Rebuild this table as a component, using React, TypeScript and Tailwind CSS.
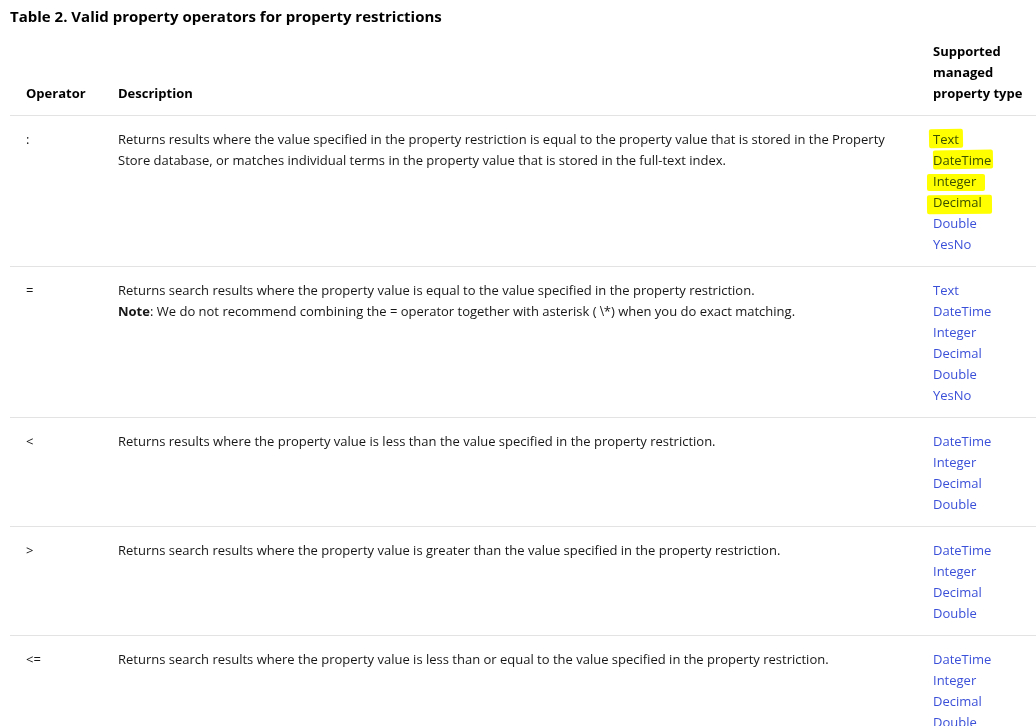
const rows: {
  op: string
  desc: React.ReactNode
  types: string[]
  marked?: boolean
}[] = [
  {
    op: ':',
    desc: (
      <>
        Returns results where the value specified in the property restriction is equal to the property value that is
        stored in the Property Store database, or matches individual terms in the property value that is stored in the
        full-text index.
      </>
    ),
    types: ['Text', 'DateTime', 'Integer', 'Decimal', 'Double', 'YesNo'],
    marked: true,
  },
  {
    op: '=',
    desc: (
      <>
        Returns search results where the property value is equal to the value specified in the property restriction.
        <br />
        <b className="font-bold">Note</b>: We do not recommend combining the = operator together with asterisk ({' '}
        <b className="font-bold font-['Liberation_Serif',serif] text-[14px]">\</b>*) when you do exact matching.
      </>
    ),
    types: ['Text', 'DateTime', 'Integer', 'Decimal', 'Double', 'YesNo'],
  },
  {
    op: '<',
    desc: <>Returns results where the property value is less than the value specified in the property restriction.</>,
    types: ['DateTime', 'Integer', 'Decimal', 'Double'],
  },
  {
    op: '>',
    desc: (
      <>Returns search results where the property value is greater than the value specified in the property restriction.</>
    ),
    types: ['DateTime', 'Integer', 'Decimal', 'Double'],
  },
  {
    op: '<=',
    desc: (
      <>
        Returns search results where the property value is less than or equal to the value specified in the property
        restriction.
      </>
    ),
    types: ['DateTime', 'Integer', 'Decimal', 'Double'],
  },
]

// hand-drawn marker strokes over the first row's types
const marks: Record<string, string> = {
  Text: 'left-[-4px] top-[0px] w-[34px] h-[19px] -rotate-1',
  DateTime: 'left-[0px] top-[0px] w-[60px] h-[19px] -rotate-1',
  Integer: 'left-[-6px] top-[3px] w-[58px] h-[17px]',
  Decimal: 'left-[-6px] top-[3px] w-[65px] h-[19px] rotate-[-0.5deg]',
}

export default function App() {
  return (
    <div className="h-[726px] overflow-hidden bg-white text-[#171717] font-['Open_Sans',sans-serif] text-[13px] leading-[21px]">
      <h2 className="pl-[10px] pt-[6px] pb-[13px] text-[15px] leading-[20px] font-bold text-black">
        Table 2. Valid property operators for property restrictions
      </h2>
      <table className="ml-[10px] w-[1060px] table-fixed border-collapse">
        <thead>
          <tr className="border-b border-[#e3e3e3] align-bottom text-left font-bold text-black">
            <th className="w-[92px] pl-4 pr-2 pb-[11px]">Operator</th>
            <th className="w-[815px] px-4 pb-[11px]">Description</th>
            <th className="w-[153px] px-4 pt-[2px] pb-[11px]">
              Supported
              <br />
              managed
              <br />
              property type
            </th>
          </tr>
        </thead>
        <tbody>
          {rows.map((r) => (
            <tr key={r.op} className="border-b border-[#e3e3e3] align-top">
              <td className="pl-4 pr-2 pt-[13px] pb-[11px]">{r.op}</td>
              <td className="px-4 pt-[13px] pb-[11px]">{r.desc}</td>
              <td className="px-4 pt-[13px] pb-[11px] text-[#3b50d8]">
                {r.types.map((t) => (
                  <div key={t}>
                    <span className="relative inline-block">
                      {r.marked && marks[t] && (
                        <span
                          className={`absolute ${marks[t]} rounded-[2px] bg-[#ffff00] mix-blend-multiply`}
                        />
                      )}
                      {t}
                    </span>
                  </div>
                ))}
              </td>
            </tr>
          ))}
        </tbody>
      </table>
    </div>
  )
}
